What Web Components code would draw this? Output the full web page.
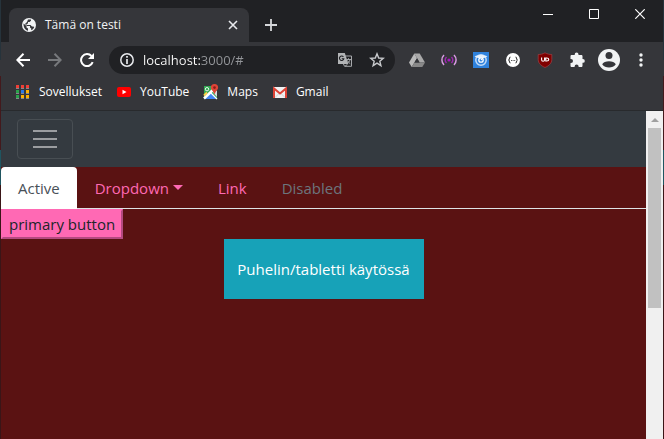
<!DOCTYPE html>
<html lang="fi">
<head>
<meta charset="utf-8">
<title>Tämä on testi</title>
<style>
body { margin: 0; min-height: 100vh; display: flex; background: linear-gradient(#26333b 0 60px, #35363a 60px 76px, #43191c 76px 150px, #1f5560 150px 185px, #3a1517 185px); }
browser-window { flex: 1; margin: 0 1px; }
</style>
</head>
<body>
<browser-window>
  <browser-tab slot="strip">Tämä on testi</browser-tab>
  <bookmark-link slot="bookmarks" icon="apps">Sovellukset</bookmark-link>
  <bookmark-link slot="bookmarks" icon="youtube">YouTube</bookmark-link>
  <bookmark-link slot="bookmarks" icon="maps">Maps</bookmark-link>
  <bookmark-link slot="bookmarks" icon="gmail">Gmail</bookmark-link>
  <demo-page>
    <nav-tab state="active">Active</nav-tab>
    <nav-tab state="dropdown">Dropdown</nav-tab>
    <nav-tab>Link</nav-tab>
    <nav-tab state="disabled">Disabled</nav-tab>
    <primary-button slot="main">primary button</primary-button>
    <device-notice slot="main">Puhelin/tabletti käytössä</device-notice>
  </demo-page>
</browser-window>
<script>
const icons = {
  globe: [14, '<circle cx="7" cy="7" r="7" fill="#f1f3f4"/><path d="M1.500 5.500l3 2.500v1.500l1.500 1v2.200C3.500 12.300 1.300 9.500 1.500 5.500zM6 1.500h3v1.300L7.500 4H6v1.500L4.500 6v1h4l1.500 1.500h1.500l.7.700c-.7 1.500-1.700 2.500-3 3V10.500L8 9.500V8H5L3 6l2-2z" fill="#35363a"/>'],
  close: [10, '<path d="M1 1l8 8M9 1l-8 8" stroke="#e8eaed" stroke-width="1.600"/>'],
  plus: [12, '<path d="M6 0v12M0 6h12" stroke="#d5d7da" stroke-width="1.800"/>'],
  min: [10, '<path d="M0 5.500h10" stroke="#fff"/>'],
  max: [10, '<path d="M.5.5h9v9h-9z" fill="none" stroke="#fff"/>'],
  exit: [10, '<path d="M.3.3l9.400 9.400M9.700.3L.3 9.700" stroke="#fff" stroke-width="1.200"/>'],
  back: [14, '<path d="M14 7H1.500M7.500.8L1.300 7l6.200 6.200" fill="none" stroke="#fff" stroke-width="2"/>'],
  forward: [14, '<path d="M0 7h12.500M6.500.8L12.700 7l-6.200 6.200" fill="none" stroke="#77797c" stroke-width="2"/>'],
  reload: [14, '<path d="M12.700 9.200A6 6 0 1 1 11.500 3" fill="none" stroke="#fff" stroke-width="2"/><path d="M14 0v6H8z" fill="#fff"/>'],
  info: [14, '<circle cx="7" cy="7" r="6.200" fill="none" stroke="#e8eaed" stroke-width="1.500"/><path d="M7 3v1.800M7 6v5" stroke="#e8eaed" stroke-width="1.700"/>'],
  translate: [16, '<path d="M8 4h6.500v10.300H7.500L6 11" fill="none" stroke="#a6a8ab"/><path d="M1 1h6.800l3.600 11H1z" fill="#b2b4b6"/><path d="M6.400 4.900a2.200 2.200 0 1 0 .4 1.900H4.700" fill="none" stroke="#202124" stroke-width="1.100"/><path d="M9 7.500h5M11.500 6.200v1.300M13 7.500c-.3 2-1.500 3-2.300 3.700M10.500 8.500c.7 1.500 1.700 2.500 2.800 3.300M8 14.300l2.500-2" fill="none" stroke="#a6a8ab"/>'],
  star: [16, '<path d="M8 1.800l1.700 4.200 4.600.3-3.500 2.900 1.100 4.500L8 11.200l-3.900 2.500 1.100-4.500L1.700 6.300 6.300 6z" fill="none" stroke="#c7c9cc" stroke-width="1.400"/>'],
  drive: [16, '<path d="M5.300 1.500h5.400L16 10.500h-5.400z" fill="#a9a9a9"/><path d="M5.300 1.500L8 6.200 2.700 15 0 10.500z" fill="#bababa"/><path d="M5.400 10.500H16L13.300 15H2.700z" fill="#888"/><path d="M8 6.200l2.600 4.300H5.400z" fill="#35363a"/>'],
  signal: [16, '<circle cx="8" cy="8" r="1.600" fill="#a51cbd"/><path d="M5.500 5a4.500 4.500 0 0 0 0 6M10.500 5a4.500 4.500 0 0 1 0 6" fill="none" stroke="#9c27b0" stroke-width="1.400"/><path d="M3 3a7 7 0 0 0 0 10M13 3a7 7 0 0 1 0 10" fill="none" stroke="#d79be1" stroke-width="1.500"/>'],
  eye: [16, '<path d="M0 0h16v16H0z" fill="#2f82dc"/><circle cx="8" cy="8" r="5.200" fill="none" stroke="#c3dcf8" stroke-width="1.500"/><path d="M1.500 4.500c3.500-2 9.500-2 13 0L11 6H5z" fill="#e5f1fd"/><circle cx="8" cy="8" r="2.200" fill="#2f82dc" stroke="#fff" stroke-width="1.300"/><circle cx="8.500" cy="7.500" r=".8" fill="#fff"/>'],
  braces: [16, '<circle cx="8" cy="8" r="7" fill="#fff"/><path d="M5.500 5C3.800 5 5.100 8 3.300 8c1.800 0 .5 3 2.200 3M10.500 5c1.700 0 .4 3 2.200 3-1.800 0-.5 3-2.200 3" fill="none" stroke="#333" stroke-width="1.100"/><path d="M6 8.500h1M7.600 8.500h1M9.200 8.500h1" stroke="#555"/>'],
  shield: [16, '<path d="M8 .8c2.300 1.300 4.600 1.700 6.800 1.700v5c0 4-3.300 6.500-6.800 8-3.500-1.500-6.800-4-6.800-8v-5C3.400 2.500 5.700 2.100 8 .8z" fill="#800000" stroke="#9b4449" stroke-width=".7"/><path d="M4.600 5.500v2.300c0 2 3 2 3 0V5.500M8.800 6v3h1c2.600 0 2.600-3 0-3z" fill="none" stroke="#fff" stroke-width="1.100"/>'],
  puzzle: [16, '<path d="M1.500 4.300c0-.8.500-1.300 1.300-1.300h2.900V2.500a1.900 1.900 0 0 1 3.800 0V3h2.700c.8 0 1.300.5 1.300 1.300v2.700h.4a1.900 1.900 0 0 1 0 3.800h-.4v2.900c0 .8-.5 1.300-1.300 1.300H9.600v-.5a2 2 0 0 0-4 0v.5H2.800c-.8 0-1.300-.5-1.300-1.300v-2.700H2a2 2 0 0 0 0-4h-.5z" fill="#f1f3f4"/>'],
  avatar: [22, '<circle cx="11" cy="11" r="11" fill="#f1f3f4"/><circle cx="11" cy="6.500" r="3.500" fill="#35363a"/><path d="M4.200 15.300c1.700-4 11.900-4 13.600 0-2.800 4.300-10.800 4.300-13.600 0z" fill="#35363a"/>'],
  dots: [16, '<circle cx="8" cy="3" r="1.700" fill="#f1f3f4"/><circle cx="8" cy="8" r="1.700" fill="#f1f3f4"/><circle cx="8" cy="13" r="1.700" fill="#f1f3f4"/>'],
  apps: [16, '<path d="M1 1h3v3H1zM6 1h3v3H6zM11 1h3v3h-3z" fill="#ef3e36"/><path d="M1 6h3v3H1zM1 11h3v3H1z" fill="#2ba24c"/><path d="M6 6h3v3H6z" fill="#2878e8"/><path d="M11 6h3v3h-3zM6 11h3v3H6zM11 11h3v3h-3z" fill="#fbb003"/><path d="M1 4.500h3M6 4.500h3M11 4.500h3M1 9.500h3M6 9.500h3M11 9.500h3M1 14.500h3M6 14.500h3M11 14.500h3" stroke="#85878a"/>'],
  youtube: [16, '<rect x="1" y="3" width="14" height="10" rx="2" fill="#f00"/><path d="M6.500 5.800v4.400L10.500 8z" fill="#fff"/>'],
  maps: [16, '<path d="M1 2h13v13H1z" fill="#34a853"/><path d="M2 15l6-6.500 6 6.500z" fill="#4285f4"/><path d="M1 14.500L12 4" stroke="#fff" stroke-width="2.600"/><path d="M8 9l6 6" stroke="#fff" stroke-width="1.300"/><path d="M1 11.500l3-3" stroke="#ffd04b" stroke-width="2"/><path d="M10 8.500l4-2V13z" fill="#d9dce0"/><circle cx="4" cy="5.200" r="1.700" fill="none" stroke="#e8f5ec"/><path d="M11.500 0a3.600 3.600 0 0 1 3.600 3.600c0 2.700-2.900 3.600-3.600 7.400-.7-3.800-3.600-4.700-3.600-7.400A3.600 3.600 0 0 1 11.500 0z" fill="#df4437"/><circle cx="11.500" cy="3.600" r="1.300" fill="#871d16"/>'],
  gmail: [16, '<rect x="1" y="3" width="14" height="11" rx="1" fill="#f2f2f2"/><path d="M3 13.500l5-5 5 5" fill="none" stroke="#d3d3d3"/><path d="M2 14V4.500L8 9.500l6-5V14" fill="none" stroke="#dd4437" stroke-width="2"/>'],
  burger: [24, '<path d="M0 4h24M0 12h24M0 20h24" stroke="#9b9da0" stroke-width="2"/>']
};
const define = (tag, markup, setup) => {
  const t = document.createElement('template');
  t.innerHTML = markup;
  customElements.define(tag, class extends HTMLElement {
    constructor() { super(); this.attachShadow({ mode: 'open' }).append(t.content.cloneNode(true)); }
    connectedCallback() { if (setup) setup(this, this.shadowRoot); }
  });
};
customElements.define('ui-icon', class extends HTMLElement {
  static observedAttributes = ['name'];
  constructor() { super(); this.attachShadow({ mode: 'open' }); }
  attributeChangedCallback(attribute, before, name) {
    const [s, body] = icons[name];
    this.shadowRoot.innerHTML = `<style>:host{display:block;flex:none}svg{display:block}</style><svg width="${s}" height="${s}" viewBox="0 0 ${s} ${s}" aria-hidden="true">${body}</svg>`;
  }
});
define('icon-button', `<style>
  :host{display:block;flex:none;width:32px;height:28px}
  button{width:100%;height:100%;padding:0;border:0;background:none;display:flex;align-items:center;justify-content:center}
  </style><button><ui-icon></ui-icon></button>`, (el, root) => {
  root.querySelector('button').setAttribute('aria-label', el.getAttribute('label'));
  root.querySelector('ui-icon').setAttribute('name', el.getAttribute('icon'));
});
define('browser-tab', `<style>
  :host{display:flex;align-items:center;box-sizing:border-box;flex:0 1 240px;height:34px;padding:0 4px 0 13px;background:#35363a;border-radius:8px 8px 0 0;color:#f1f3f4}
  span{flex:1;padding-left:9px;white-space:nowrap}
  icon-button{width:24px}
  </style><ui-icon name="globe"></ui-icon><span><slot></slot></span><icon-button icon="close" label="Sulje välilehti"></icon-button>`);
define('address-bar', `<style>
  :host{display:flex;align-items:center;flex:1;min-width:0;height:28px;margin:0 6px;padding:0 2px;border-radius:14px;background:#202124}
  input{flex:1;min-width:0;padding:0;border:0;outline:0;font:13px "Open Sans",sans-serif;color:transparent;background:linear-gradient(90deg,#fff 58px,#94969a 58px);-webkit-background-clip:text;background-clip:text}
  </style><icon-button icon="info" label="Sivuston tiedot"></icon-button><input aria-label="Osoite" value="localhost:3000/#" spellcheck="false"><icon-button icon="translate" label="Käännä"></icon-button><icon-button icon="star" label="Lisää kirjanmerkki"></icon-button>`);
define('bookmark-link', `<style>:host{display:block}a{display:flex;align-items:center;gap:8px;color:#fff;text-decoration:none}</style><a href="#"><ui-icon></ui-icon><slot></slot></a>`, (el, root) => {
  root.querySelector('ui-icon').setAttribute('name', el.getAttribute('icon'));
});
define('page-scrollbar', `<style>
  :host{display:flex;flex-direction:column;align-items:center;flex:none;width:17px;background:#f0f0f0}
  i{width:0;margin:7px 0 6px;border:4px solid transparent;border-top:0;border-bottom:4px solid #a0a0a0}
  b{width:13px;height:55%;background:#c1c1c1}
  </style><i></i><b></b>`);
define('browser-window', `<style>
  :host{display:flex;flex-direction:column;min-width:0;background:#35363a;font:12px/16px "Open Sans",sans-serif;color:#fff}
  header{display:flex;align-items:flex-end;height:42px;padding-left:8px;background:#202124}
  .new{width:28px;height:34px;margin-left:8px}
  .controls{display:flex;align-self:flex-start;margin-left:auto}
  .controls icon-button{width:46px}
  .toolbar{display:flex;align-items:center;height:36px;padding:0 6px}
  .bookmarks{display:flex;align-items:center;gap:14px;height:28px;padding:0 14px 4px;border-bottom:1px solid #282a2d}
  .view{display:flex;flex:1}
  ::slotted(demo-page){flex:1;min-width:0}
  </style>
  <header><slot name="strip"></slot><icon-button class="new" icon="plus" label="Uusi välilehti"></icon-button>
  <div class="controls"><icon-button icon="min" label="Pienennä"></icon-button><icon-button icon="max" label="Suurenna"></icon-button><icon-button icon="exit" label="Sulje"></icon-button></div></header>
  <div class="toolbar"><icon-button icon="back" label="Takaisin"></icon-button><icon-button icon="forward" label="Eteenpäin"></icon-button><icon-button icon="reload" label="Lataa uudelleen"></icon-button>
  <address-bar></address-bar>
  <icon-button icon="drive" label="Drive"></icon-button><icon-button icon="signal" label="Signal"></icon-button><icon-button icon="eye" label="Viewer"></icon-button><icon-button icon="braces" label="JSON"></icon-button><icon-button icon="shield" label="uBlock"></icon-button><icon-button icon="puzzle" label="Laajennukset"></icon-button><icon-button icon="avatar" label="Profiili"></icon-button><icon-button icon="dots" label="Valikko"></icon-button></div>
  <nav class="bookmarks"><slot name="bookmarks"></slot></nav>
  <div class="view"><slot></slot><page-scrollbar></page-scrollbar></div>`);
define('demo-page', `<style>
  :host{display:block;background:#5a1212;font:15px/24px "Open Sans",sans-serif}
  header{display:flex;align-items:center;height:56px;padding:0 16px;background:#343a40}
  header icon-button{box-sizing:border-box;width:56px;height:40px;border:1px solid #484e53;border-radius:4px}
  nav{display:flex;gap:1px;border-bottom:1px solid #dee2e6}
  </style><header><icon-button icon="burger" label="Valikko"></icon-button></header><nav><slot></slot></nav><main><slot name="main"></slot></main>`);
define('nav-tab', `<style>
  :host{display:block;color:#ff69b4}
  a{display:flex;align-items:center;height:41px;padding:0 17px;color:inherit;text-decoration:none}
  i{display:none;margin-left:4px;border:5px solid transparent;border-top-color:currentColor;border-bottom:0}
  :host([state=dropdown]) i{display:block}
  :host([state=active]){color:#495057;background:#fff;border-radius:4px 4px 0 0;margin-bottom:-1px;padding-bottom:1px}
  :host([state=disabled]){color:#6c757d}
  </style><a href="#"><slot></slot><i></i></a>`);
define('primary-button', `<style>
  :host{display:block}
  button{display:block;height:30px;padding:0 6px;border:2px solid;border-color:#ff69b4 #b44a80 #b44a80 #ff69b4;background:#ff69b4;color:#212529;font:inherit}
  </style><button><slot></slot></button>`);
define('device-notice', `<style>:host{display:flex;align-items:center;justify-content:center;width:200px;height:60px;margin:0 auto;background:#17a2b8;color:#fff}</style><slot></slot>`);
</script>
</body>
</html>
